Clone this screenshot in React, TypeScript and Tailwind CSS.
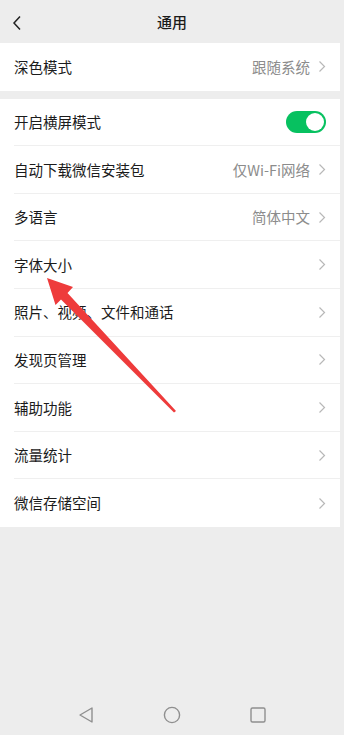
const GROUP1 = [{ label: "深色模式", value: "跟随系统" }];

const GROUP2: { label: string; value?: string; toggle?: boolean }[] = [
  { label: "开启横屏模式", toggle: true },
  { label: "自动下载微信安装包", value: "仅Wi-Fi网络" },
  { label: "多语言", value: "简体中文" },
  { label: "字体大小" },
  { label: "照片、视频、文件和通话" },
  { label: "发现页管理" },
  { label: "辅助功能" },
  { label: "流量统计" },
  { label: "微信存储空间" },
];

function Chevron() {
  return (
    <svg width="8" height="13" viewBox="0 0 8 13" className="ml-[8px]">
      <path d="M1.5 1.5 L6.5 6.5 L1.5 11.5" fill="none" stroke="#b8b8b8" strokeWidth="1.2" />
    </svg>
  );
}

function Toggle() {
  return (
    <div className="flex h-[22px] w-[40px] items-center justify-end rounded-full bg-[#07c160] pr-[2px]">
      <div className="h-[18px] w-[18px] rounded-full bg-white" />
    </div>
  );
}

function Row({ label, value, toggle, last }: { label: string; value?: string; toggle?: boolean; last?: boolean }) {
  return (
    <div className="pl-[14px]">
      <div
        className={
          "flex h-[47.6px] items-center justify-between pr-[14px] " +
          (last ? "" : "border-b border-[#efefef]")
        }
      >
        <span className="text-[14.5px] text-[#1b1b1b]">{label}</span>
        {toggle ? (
          <Toggle />
        ) : (
          <div className="flex items-center">
            {value && <span className="text-[14.5px] text-[#8c8c8c]">{value}</span>}
            <Chevron />
          </div>
        )}
      </div>
    </div>
  );
}

export default function App() {
  return (
    <div
      className="relative flex h-[735px] w-[344px] flex-col overflow-hidden bg-[#ededed]"
      style={{ fontFamily: '"Noto Sans CJK SC", "Noto Sans", sans-serif' }}
    >
      {/* header */}
      <div className="relative flex h-[43px] items-center justify-center pt-[1px]">
        <svg width="10" height="16" viewBox="0 0 10 16" className="absolute left-[12px] top-[15px]">
          <path d="M8 1.5 L2 8 L8 14.5" fill="none" stroke="#222" strokeWidth="1.5" />
        </svg>
        <span className="text-[15px] font-medium text-[#1b1b1b]">通用</span>
      </div>

      <div className="w-[340px] bg-white">
        {GROUP1.map((r) => (
          <Row key={r.label} label={r.label} value={r.value} last />
        ))}
      </div>

      <div className="mt-[8px] w-[340px] bg-white">
        {GROUP2.map((r, i) => (
          <Row key={r.label} label={r.label} value={r.value} toggle={r.toggle} last={i === GROUP2.length - 1} />
        ))}
      </div>

      <div className="flex-1" />

      {/* system nav bar */}
      <div className="flex h-[42px] items-start justify-center gap-[68px] pt-[13px]">
        <svg width="18" height="18" viewBox="0 0 18 18">
          <path d="M15 2 L3 9 L15 16 Z" fill="none" stroke="#8f8f8f" strokeWidth="1.4" strokeLinejoin="round" />
        </svg>
        <svg width="18" height="18" viewBox="0 0 18 18">
          <circle cx="9" cy="9" r="7.6" fill="none" stroke="#8f8f8f" strokeWidth="1.4" />
        </svg>
        <svg width="18" height="18" viewBox="0 0 18 18">
          <rect x="2" y="2" width="14" height="14" rx="1.5" fill="none" stroke="#8f8f8f" strokeWidth="1.4" />
        </svg>
      </div>

      {/* red annotation arrow */}
      <svg className="pointer-events-none absolute left-0 top-0" width="344" height="735" viewBox="0 0 344 735">
        <polygon
          points="47,278 73,287 67.5,293 176,411 174,412.5 61,299.5 55.5,305"
          fill="#ee3b3b"
        />
      </svg>
    </div>
  );
}
